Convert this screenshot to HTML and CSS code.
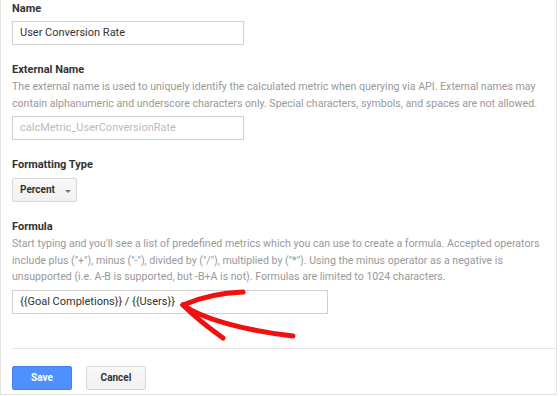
FILE: index.html
```html
<!DOCTYPE html>
<html>
<head>
  <meta charset="utf-8">
  <title>Calculated Metric</title>
  <link rel="stylesheet" href="styles.css">
</head>
<body>
  <div class="panel">
    <div class="field">
      <label class="label">Name</label>
      <div class="input">User Conversion Rate</div>
    </div>
    <div class="field">
      <label class="label">External Name</label>
      <p class="help">The external name is used to uniquely identify the calculated metric when querying via API. External names may contain alphanumeric and underscore characters only. Special characters, symbols, and spaces are not allowed.</p>
      <div class="input placeholder">calcMetric_UserConversionRate</div>
    </div>
    <div class="field">
      <label class="label">Formatting Type</label>
      <div class="btn select">Percent <span class="caret"></span></div>
    </div>
    <div class="field">
      <label class="label">Formula</label>
      <p class="help">Start typing and you'll see a list of predefined metrics which you can use to create a formula. Accepted operators include plus ("+"), minus ("-"), divided by ("/"), multiplied by ("*"). Using the minus operator as a negative is unsupported (i.e. A-B is supported, but -B+A is not). Formulas are limited to 1024 characters.</p>
      <div class="input wide">{{Goal Completions}} / {{Users}}</div>
    </div>
    <div class="actions">
      <div class="btn primary">Save</div>
      <div class="btn">Cancel</div>
    </div>
    <svg class="arrow" width="140" height="60" viewBox="170 285 140 60">
      <path d="M182 305 C198 298 215 293 242 292" />
      <path d="M182 305 C200 318 240 330 292 336" />
      <path d="M182 305 C195 318 208 328 222 338" />
    </svg>
  </div>
</body>
</html>
```

FILE: styles.css
```css
body {
  margin: 0;
  background: #fff;
  font-family: Roboto, 'Liberation Sans', sans-serif;
}

.panel {
  position: relative;
  width: 544px;
  height: 394px;
  border: 1px solid #e3e3e3;
  border-top: 0;
  padding: 0 0 0 11px;
  display: flex;
  flex-direction: column;
}

.field {
  display: flex;
  flex-direction: column;
  align-items: flex-start;
}

.label {
  font-size: 11px;
  font-weight: bold;
  color: #333;
  line-height: 16px;
  margin-top: 17px;
  margin-bottom: 4px;
}
.field:first-child .label {
  margin-top: 1px;
}

.help {
  margin: -3px 0 4px;
  font-size: 10.6px;
  line-height: 16.5px;
  color: #999;
}

.input {
  width: 232px;
  height: 24px;
  box-sizing: border-box;
  border: 1px solid #d0d0d0;
  padding: 0 7px;
  font-size: 11px;
  line-height: 22px;
  color: #333;
}
.input.placeholder {
  color: #bbb;
}
.input.wide {
  width: 316px;
}

.btn {
  height: 24px;
  box-sizing: border-box;
  border: 1px solid #d8d8d8;
  border-radius: 2px;
  background: linear-gradient(#f8f8f8, #f1f1f1);
  font-size: 10px;
  font-weight: bold;
  color: #333;
  line-height: 22px;
  text-align: center;
  width: 60px;
}

.select {
  width: 65px;
  text-align: left;
  padding-left: 7px;
  margin-top: 1px;
  display: flex;
  align-items: center;
  gap: 10px;
}

.caret {
  width: 0;
  height: 0;
  border-left: 3.5px solid transparent;
  border-right: 3.5px solid transparent;
  border-top: 3.5px solid #777;
  margin-top: 2px;
}

.actions {
  margin-top: 34px;
  border-top: 1px solid #e6e6e6;
  padding-top: 17px;
  display: flex;
  gap: 14px;
}

.primary {
  background: #4d90fe;
  border-color: #3f7fe8;
  color: #fff;
}

.arrow {
  position: absolute;
  left: 170px;
  top: 285px;
  overflow: visible;
}
.arrow path {
  fill: none;
  stroke: #f01010;
  stroke-width: 5;
  stroke-linecap: round;
}
```
